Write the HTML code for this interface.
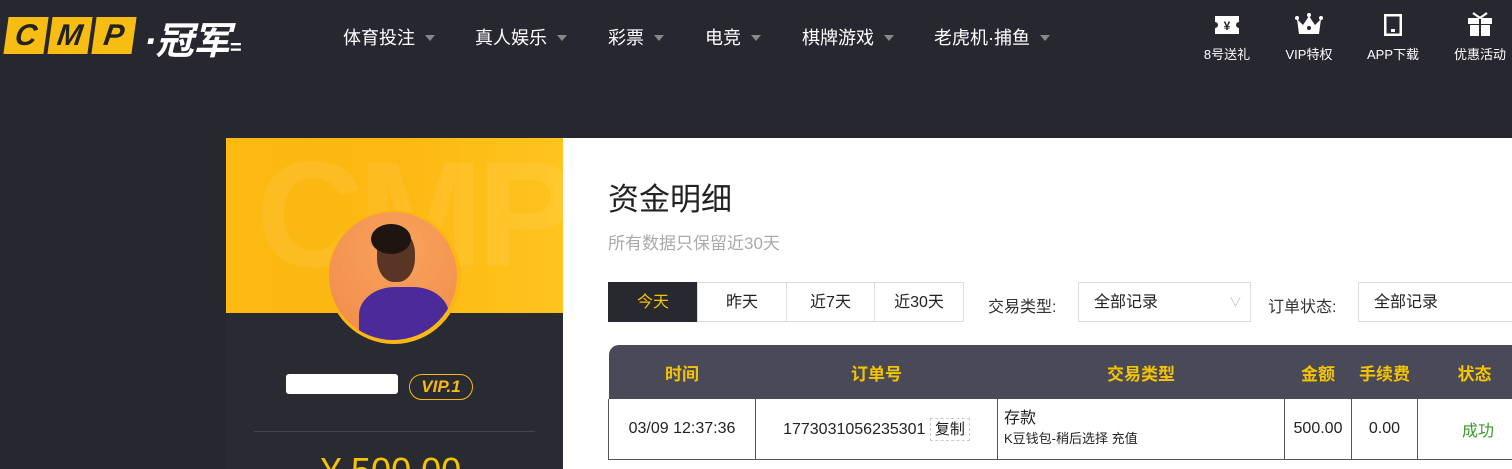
<!DOCTYPE html>
<html><head><meta charset="utf-8"><style>
*{margin:0;padding:0;box-sizing:border-box}
body{width:1512px;height:469px;overflow:hidden;background:#272730;font-family:"Liberation Sans","Noto Sans CJK SC",sans-serif;position:relative}
.a{position:absolute}
.nav{color:#fff;font-size:18px;top:24px}
.nav i{display:inline-block;width:0;height:0;border-left:5px solid transparent;border-right:5px solid transparent;border-top:6px solid #888;margin-left:10px;vertical-align:3px}
.ic{color:#fff;font-size:13px;top:44px;width:80px;text-align:center}
.tab{top:282px;height:40px;border:1px solid #ddd;font-size:16px;line-height:40px;text-align:center;color:#222;background:#fff}
.lg{width:40px;height:37px;background:#f8bd13;transform:skewX(-8deg);color:#222;font:italic 900 30px 'Liberation Sans';text-align:center;line-height:37px}
</style></head><body>
<div class="a" style="left:6px;top:17px;display:flex;gap:4px">
<div class="lg">C</div><div class="lg">M</div><div class="lg">P</div>
</div>
<div class="a" style="left:144px;top:10px;color:#fff;font:italic bold 38px 'Liberation Sans','Noto Sans CJK SC',sans-serif;letter-spacing:-1px">·冠军<span style="font-size:20px">=</span></div>
<div class="a nav" style="left:343px">体育投注<i></i></div>
<div class="a nav" style="left:475px">真人娱乐<i></i></div>
<div class="a nav" style="left:608px">彩票<i></i></div>
<div class="a nav" style="left:705px">电竞<i></i></div>
<div class="a nav" style="left:802px">棋牌游戏<i></i></div>
<div class="a nav" style="left:934px">老虎机·捕鱼<i></i></div>
<svg class="a" style="left:1215px;top:16px" width="24" height="18"><path d="M0 0H24V6a3 3 0 0 0 0 6V18H0V12a3 3 0 0 0 0-6Z" fill="#fff"/><text x="12" y="14" font-size="12" font-weight="bold" text-anchor="middle" fill="#272730">¥</text></svg>
<svg class="a" style="left:1295px;top:13px" width="28" height="22"><path d="M2 6L8 12L14 3L20 12L26 6L24 21H4Z" fill="#fff"/><circle cx="14" cy="15" r="2" fill="#272730"/><circle cx="2" cy="5" r="2" fill="#fff"/><circle cx="26" cy="5" r="2" fill="#fff"/><circle cx="14" cy="2" r="2" fill="#fff"/></svg>
<svg class="a" style="left:1384px;top:14px" width="18" height="22"><rect x="1" y="1" width="16" height="20" fill="none" stroke="#fff" stroke-width="3"/><rect x="7" y="15" width="4" height="3" fill="#fff"/></svg>
<svg class="a" style="left:1468px;top:12px" width="24" height="24"><rect x="0" y="6" width="24" height="6" fill="#fff"/><rect x="2" y="13" width="20" height="11" fill="#fff"/><path d="M12 6V24" stroke="#272730" stroke-width="2"/><path d="M5 1L12 6L19 1" stroke="#fff" stroke-width="2" fill="none"/></svg>
<div class="a ic" style="left:1187px">8号送礼</div>
<div class="a ic" style="left:1269px">VIP特权</div>
<div class="a ic" style="left:1353px">APP下载</div>
<div class="a ic" style="left:1440px">优惠活动</div>

<div class="a" style="left:226px;top:138px;width:337px;height:331px;background:#2a2a33;overflow:hidden">
<div class="a" style="left:0;top:0;width:337px;height:175px;background:linear-gradient(90deg,#fcb912,#fdb812 50%,#ffc41e);overflow:hidden">
<div class="a" style="left:30px;top:-10px;font:bold 150px 'Liberation Sans';color:rgba(255,255,255,.07);letter-spacing:-6px">CMP</div></div>
<div class="a" style="left:101px;top:72px;width:134px;height:134px;border-radius:50%;background:#fcb712"></div>
<div class="a" style="left:103px;top:74px;width:128px;height:128px;border-radius:50%;background:radial-gradient(circle at 55% 30%,#f9a35c,#f0894b);overflow:hidden">
<div class="a" style="left:30px;top:75px;width:90px;height:70px;border-radius:40% 40% 0 0;background:#4b2b9a"></div>
<div class="a" style="left:48px;top:18px;width:38px;height:52px;border-radius:45%;background:#5a3526"></div>
<div class="a" style="left:42px;top:12px;width:40px;height:30px;border-radius:50%;background:#1e1410"></div></div>
<div class="a" style="left:60px;top:236px;width:112px;height:20px;background:#fff;border-radius:3px"></div>
<div class="a" style="left:183px;top:236px;width:64px;height:26px;border:1px solid #f5bb13;border-radius:13px;color:#f5bb13;font:italic bold 17px 'Liberation Sans';text-align:center;line-height:24px">VIP.1</div>
<div class="a" style="left:28px;top:293px;width:281px;height:1px;background:#44444e"></div>
<div class="a" style="left:95px;top:312px;color:#f5c400;font-size:36px">¥ 500.00</div>
</div>

<div class="a" style="left:563px;top:138px;width:949px;height:331px;background:#fff"></div>
<div class="a" style="left:608px;top:174px;font-size:31px;color:#222">资金明细</div>
<div class="a" style="left:608px;top:229px;font-size:17px;color:#aaa">所有数据只保留近30天</div>
<div class="a tab" style="left:608px;width:90px;background:#282830;color:#f5c400;border-color:#282830">今天</div>
<div class="a tab" style="left:697px;width:90px">昨天</div>
<div class="a tab" style="left:786px;width:89px">近7天</div>
<div class="a tab" style="left:874px;width:90px">近30天</div>
<div class="a" style="left:988px;top:293px;font-size:16px;color:#333">交易类型:</div>
<div class="a tab" style="left:1078px;width:173px;text-align:left;padding-left:15px">全部记录<span style="position:absolute;right:8px;color:#ccc;font-size:13px">∨</span></div>
<div class="a" style="left:1268px;top:293px;font-size:16px;color:#333">订单状态:</div>
<div class="a tab" style="left:1358px;width:160px;text-align:left;padding-left:15px">全部记录</div>
<table class="a" style="left:608px;top:345px;width:910px;border-collapse:collapse;font-size:16px;color:#222">
<tr style="background:#4a4958;color:#f5c400;height:54px;font-size:17px">
<th style="width:147px;border-radius:10px 0 0 0">时间</th><th style="width:242px">订单号</th><th style="width:287px">交易类型</th><th style="width:67px">金额</th><th style="width:66px">手续费</th><th style="text-align:left;padding-left:40px">状态</th></tr>
<tr style="height:60px;border-bottom:1px solid #555">
<td style="text-align:center;border-left:1px solid #555;border-right:1px solid #555">03/09 12:37:36</td>
<td style="text-align:center;border-right:1px solid #555">1773031056235301 <span style="border:1px dashed #ccc;padding:2px 4px;font-size:15px">复制</span></td>
<td style="border-right:1px solid #555;padding-left:6px;line-height:20px">存款<br><span style="font-size:13px">K豆钱包-稍后选择 充值</span></td>
<td style="text-align:center;border-right:1px solid #555">500.00</td>
<td style="text-align:center;border-right:1px solid #555">0.00</td>
<td style="color:#3a9a2a;padding-left:44px">成功</td></tr>
</table>
</body></html>
